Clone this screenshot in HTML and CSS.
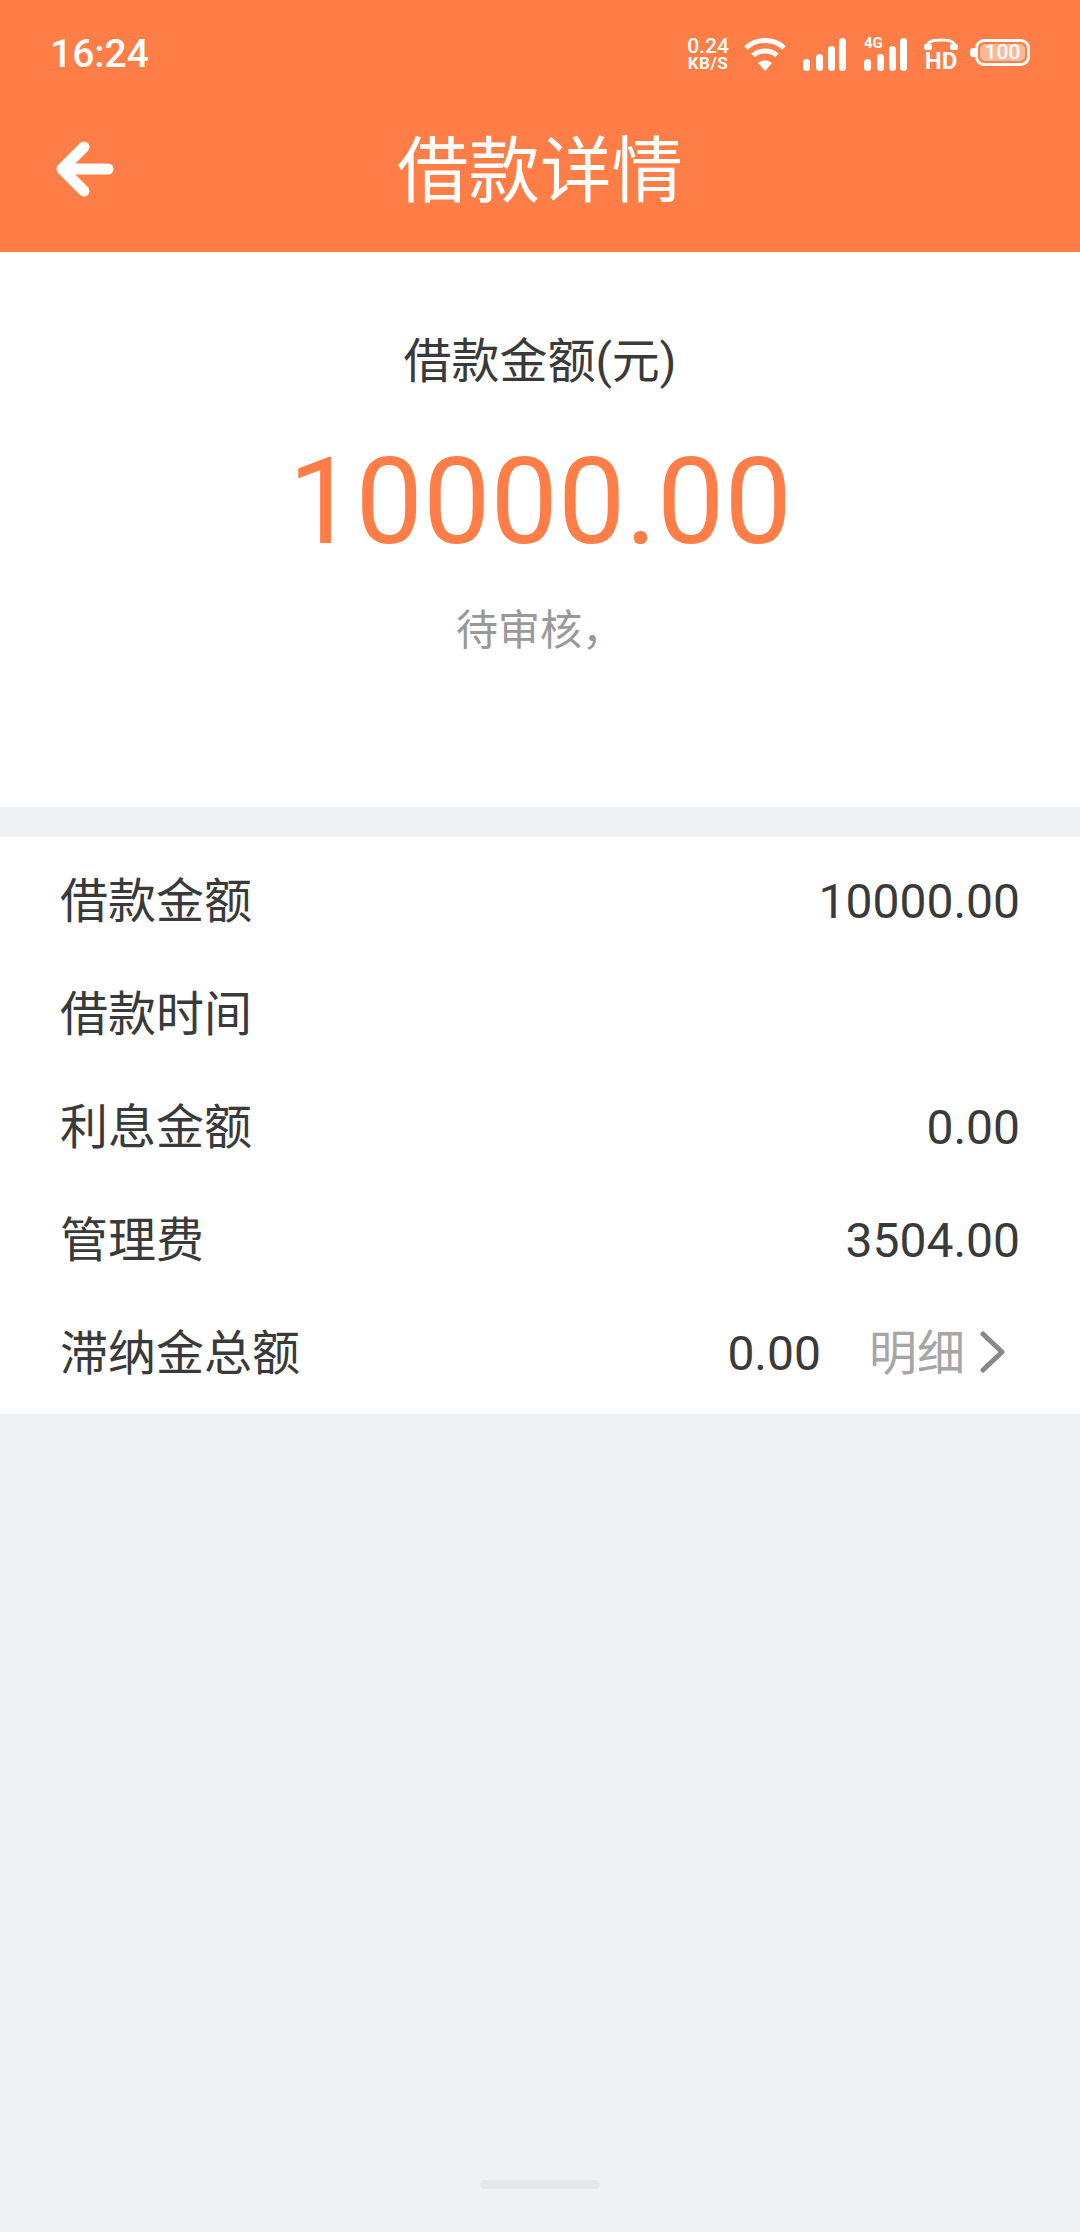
FILE: index.html
```html
<!DOCTYPE html>
<html lang="zh-CN">
<head>
  <meta charset="UTF-8" />
  <title>借款详情</title>
  <link rel="stylesheet" href="styles.css">
</head>
<body>
  <header class="top">
    <div class="status">
      <span class="time">16:24</span>
      <div class="status-icons">
        <div class="speed"><span class="rate">0.24</span><span class="unit">KB/S</span></div>
        <svg class="wifi" width="42" height="33" viewBox="0 0 42 33">
          <g fill="none" stroke="#fff" stroke-width="5">
            <path d="M2 10 C12 0 30 0 40 10" />
            <path d="M9 17.500 C15 11.500 27 11.500 33 17.500" />
          </g>
          <path d="M14 25 C18 21.500 24 21.500 28 25 L21 33 Z" fill="#fff" />
        </svg>
        <svg class="signal" width="43" height="33" viewBox="0 0 43 33">
          <rect x="0" y="21" width="7" height="12" rx="3.500" fill="#fff" />
          <rect x="13" y="16" width="7" height="17" rx="3.500" fill="#fff" />
          <rect x="25" y="8" width="7" height="25" rx="3.500" fill="#fff" />
          <rect x="36" y="0" width="7" height="33" rx="3.500" fill="#fff" />
        </svg>
        <div class="signal-4g">
          <span class="net">4G</span>
          <svg width="43" height="33" viewBox="0 0 43 33">
            <rect x="0" y="21" width="7" height="12" rx="3.500" fill="#fff" />
            <rect x="13" y="16" width="7" height="17" rx="3.500" fill="#fff" />
            <rect x="25" y="8" width="7" height="25" rx="3.500" fill="#fff" />
            <rect x="36" y="0" width="7" height="33" rx="3.500" fill="#fff" />
          </svg>
        </div>
        <div class="hd">
          <svg width="34" height="13" viewBox="0 0 34 13">
            <path d="M3 10 C3 3 9 2 17 2 C25 2 31 3 31 10" fill="none" stroke="#fff" stroke-width="3" />
            <rect x="0" y="6" width="8" height="6" rx="2" fill="#fff" />
            <rect x="26" y="6" width="8" height="6" rx="2" fill="#fff" />
          </svg>
          <span class="hd-text">HD</span>
        </div>
        <div class="battery"><span class="level">100</span></div>
      </div>
    </div>
    <div class="nav">
      <svg class="back" width="60" height="58" viewBox="0 0 60 58">
        <path d="M30 6 L8 28 L30 50 M8 28 L54 28" fill="none" stroke="#fff" stroke-width="11" stroke-linecap="round" stroke-linejoin="round" />
      </svg>
      <h1>借款详情</h1>
    </div>
  </header>

  <section class="summary">
    <div class="summary-label">借款金额(元)</div>
    <div class="summary-amount">10000.00</div>
    <div class="summary-state">待审核，</div>
  </section>

  <section class="rows">
    <div class="row"><span class="label">借款金额</span><span class="num">10000.00</span></div>
    <div class="row"><span class="label">借款时间</span></div>
    <div class="row"><span class="label">利息金额</span><span class="num">0.00</span></div>
    <div class="row"><span class="label">管理费</span><span class="num">3504.00</span></div>
    <div class="row">
      <span class="label">滞纳金总额</span>
      <div class="row-right">
        <span class="num">0.00</span>
        <span class="more">明细</span>
        <svg class="chevron" width="25" height="42" viewBox="0 0 25 42">
          <path d="M3 3 L22 21 L3 39" fill="none" stroke="#888" stroke-width="5" stroke-linecap="round" stroke-linejoin="round" />
        </svg>
      </div>
    </div>
  </section>

  <div class="home-wrap"><div class="home-bar"></div></div>
</body>
</html>
```

FILE: styles.css
```css
* {
  box-sizing: border-box;
}
body {
  margin: 0;
  height: 2232px;
  display: flex;
  flex-direction: column;
  background: #eff2f5;
  color: #3a3a3a;
  font-family: Roboto, "Noto Sans CJK SC", sans-serif;
}

.top {
  height: 252px;
  background: #ff7d47;
  color: #fff;
}
.status {
  height: 108px;
  padding: 0 50px;
  display: flex;
  justify-content: space-between;
  align-items: center;
}
.time {
  font-size: 39px;
  font-weight: 500;
}
.status-icons {
  display: flex;
  align-items: flex-end;
  height: 33px;
}
.speed {
  width: 42px;
  margin-right: 15px;
  display: flex;
  flex-direction: column;
  align-items: center;
  font-weight: 500;
}
.rate {
  display: block;
  font-size: 21px;
  line-height: 18px;
}
.unit {
  display: block;
  font-size: 17px;
  font-weight: 700;
  line-height: 15px;
  margin-top: 1px;
  letter-spacing: 0.5px;
}
.wifi {
  margin-right: 17px;
}
.signal {
  margin-right: 18px;
}
.signal-4g {
  position: relative;
  width: 43px;
  height: 33px;
  margin-right: 17px;
}
.signal-4g svg {
  display: block;
}
.net {
  position: absolute;
  left: 0;
  top: -3px;
  font-size: 15px;
  font-weight: 700;
  line-height: 16px;
}
.hd {
  width: 34px;
  margin-right: 17px;
  display: flex;
  flex-direction: column;
  align-items: center;
}
.hd svg {
  display: block;
}
.hd-text {
  font-size: 24px;
  font-weight: 700;
  line-height: 20px;
}
.battery {
  position: relative;
  width: 55px;
  height: 27px;
  margin-bottom: 5px;
  padding: 2px;
  border: 3px solid #fff;
  border-radius: 9px;
}
.level {
  display: block;
  height: 17px;
  background: rgba(255, 255, 255, 0.45);
  border-radius: 5px;
  font-size: 21px;
  font-weight: 500;
  line-height: 17px;
  text-align: center;
}
.battery::before {
  content: "";
  position: absolute;
  left: -8px;
  top: 6px;
  width: 5px;
  height: 9px;
  background: #fff;
  border-radius: 3px 0 0 3px;
}

.nav {
  position: relative;
  height: 144px;
  display: flex;
  align-items: center;
  justify-content: center;
}
.nav h1 {
  margin: 0 0 16px 0;
  font-size: 71.500px;
  font-weight: 400;
  line-height: 1.2;
}
.back {
  position: absolute;
  left: 54px;
  top: 33px;
}

.summary {
  height: 555px;
  background: #fff;
  display: flex;
  flex-direction: column;
  align-items: center;
  padding-top: 75px;
}
.summary-label {
  font-size: 48px;
  line-height: 70px;
}
.summary-amount {
  margin-top: 35px;
  color: #ff7d47;
  font-size: 120px;
  line-height: 140px;
}
.summary-state {
  margin-top: 29px;
  color: #999;
  font-size: 42px;
  line-height: 60px;
}

.rows {
  margin-top: 30px;
  height: 577px;
  padding: 6px 60px;
  background: #fff;
}
.row {
  height: 113px;
  display: flex;
  justify-content: space-between;
  align-items: center;
  font-size: 48px;
}
.label {
  margin-bottom: 6px;
}
.num {
  margin-top: 3px;
}
.row-right {
  display: flex;
  align-items: center;
}
.more {
  margin: 0 0 6px 48px;
  color: #a6a6a6;
}
.chevron {
  margin: 0 15px 0 15px;
}

.home-wrap {
  flex: 1;
  display: flex;
  justify-content: center;
  align-items: flex-end;
  padding-bottom: 43px;
}
.home-bar {
  width: 120px;
  height: 9px;
  background: #e6e7e9;
  border-radius: 5px;
}
```
